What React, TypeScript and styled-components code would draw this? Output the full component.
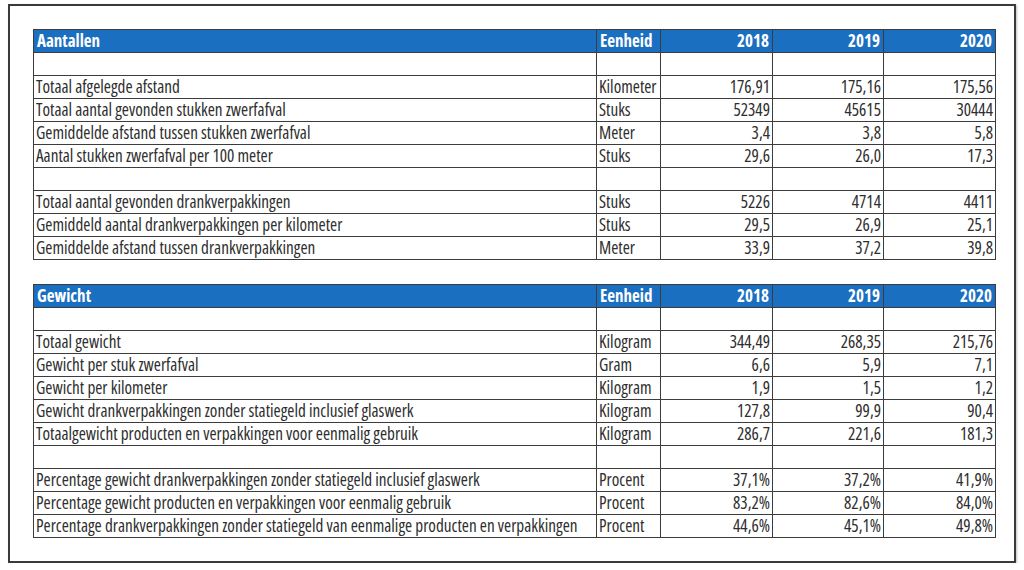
import React from 'react';
import styled, { createGlobalStyle } from 'styled-components';

const GlobalStyle = createGlobalStyle`
  body {
    margin: 0;
    background: #fff;
    font-family: 'Open Sans', 'Liberation Sans', sans-serif;
    font-stretch: condensed;
    color: #2e2e2e;
  }
`;

type Row = [string, string, string, string, string] | null;

const sections: { title: string; rows: Row[] }[] = [
  {
    title: 'Aantallen',
    rows: [
      null,
      ['Totaal afgelegde afstand', 'Kilometer', '176,91', '175,16', '175,56'],
      ['Totaal aantal gevonden stukken zwerfafval', 'Stuks', '52349', '45615', '30444'],
      ['Gemiddelde afstand tussen stukken zwerfafval', 'Meter', '3,4', '3,8', '5,8'],
      ['Aantal stukken zwerfafval per 100 meter', 'Stuks', '29,6', '26,0', '17,3'],
      null,
      ['Totaal aantal gevonden drankverpakkingen', 'Stuks', '5226', '4714', '4411'],
      ['Gemiddeld aantal drankverpakkingen per kilometer', 'Stuks', '29,5', '26,9', '25,1'],
      ['Gemiddelde afstand tussen drankverpakkingen', 'Meter', '33,9', '37,2', '39,8'],
    ],
  },
  {
    title: 'Gewicht',
    rows: [
      null,
      ['Totaal gewicht', 'Kilogram', '344,49', '268,35', '215,76'],
      ['Gewicht per stuk zwerfafval', 'Gram', '6,6', '5,9', '7,1'],
      ['Gewicht per kilometer', 'Kilogram', '1,9', '1,5', '1,2'],
      ['Gewicht drankverpakkingen zonder statiegeld inclusief glaswerk', 'Kilogram', '127,8', '99,9', '90,4'],
      ['Totaalgewicht producten en verpakkingen voor eenmalig gebruik', 'Kilogram', '286,7', '221,6', '181,3'],
      null,
      ['Percentage gewicht drankverpakkingen zonder statiegeld inclusief glaswerk', 'Procent', '37,1%', '37,2%', '41,9%'],
      ['Percentage gewicht producten en verpakkingen voor eenmalig gebruik', 'Procent', '83,2%', '82,6%', '84,0%'],
      ['Percentage drankverpakkingen zonder statiegeld van eenmalige producten en verpakkingen', 'Procent', '44,6%', '45,1%', '49,8%'],
    ],
  },
];

const years = ['2018', '2019', '2020'];

const App = () => {
  return (
    <>
      <GlobalStyle />
      <Frame>
        {sections.map((s) => (
          <Table key={s.title}>
            <colgroup>
              <col style={{ width: 563 }} />
              <col style={{ width: 64 }} />
              <col style={{ width: 112 }} />
              <col style={{ width: 111 }} />
              <col style={{ width: 112 }} />
            </colgroup>
            <thead>
              <tr>
                <HeadCell>{s.title}</HeadCell>
                <HeadCell>Eenheid</HeadCell>
                {years.map((y) => (
                  <HeadCell key={y} $num>
                    {y}
                  </HeadCell>
                ))}
              </tr>
            </thead>
            <tbody>
              {s.rows.map((r, i) =>
                r ? (
                  <tr key={i}>
                    <Cell>{r[0]}</Cell>
                    <Cell>{r[1]}</Cell>
                    <Cell $num>{r[2]}</Cell>
                    <Cell $num>{r[3]}</Cell>
                    <Cell $num>{r[4]}</Cell>
                  </tr>
                ) : (
                  <tr key={i}>
                    <Cell />
                    <Cell />
                    <Cell />
                    <Cell />
                    <Cell />
                  </tr>
                )
              )}
            </tbody>
          </Table>
        ))}
      </Frame>
    </>
  );
};

export default App;

const Frame = styled.div`
  box-sizing: border-box;
  margin: 4px 8px 0;
  width: 1008px;
  height: 559px;
  border: 2px solid #3a3a3a;
  box-shadow: 1px 1px 2px rgba(0, 0, 0, 0.25);
  padding: 23px 0 0 23px;
  display: flex;
  flex-direction: column;
  gap: 24px;
`;

const Table = styled.table`
  border-collapse: collapse;
  table-layout: fixed;
  width: 962px;
  border: 1px solid #3c3c3c;
`;

const HeadCell = styled.th<{ $num?: boolean }>`
  height: 23px;
  padding: 0 3px;
  box-sizing: border-box;
  background: #1b6fc1;
  color: #fff;
  font-size: 17px;
  font-weight: 700;
  text-align: ${(p) => (p.$num ? 'right' : 'left')};
  border: 1px solid #3c3c3c;
  line-height: 20px;
  white-space: nowrap;
`;

const Cell = styled.td<{ $num?: boolean }>`
  height: 23px;
  padding: 0 2px;
  box-sizing: border-box;
  font-size: 17.2px;
  text-align: ${(p) => (p.$num ? 'right' : 'left')};
  border: 1px solid #3c3c3c;
  line-height: 20px;
  white-space: nowrap;
  overflow: hidden;
`;
